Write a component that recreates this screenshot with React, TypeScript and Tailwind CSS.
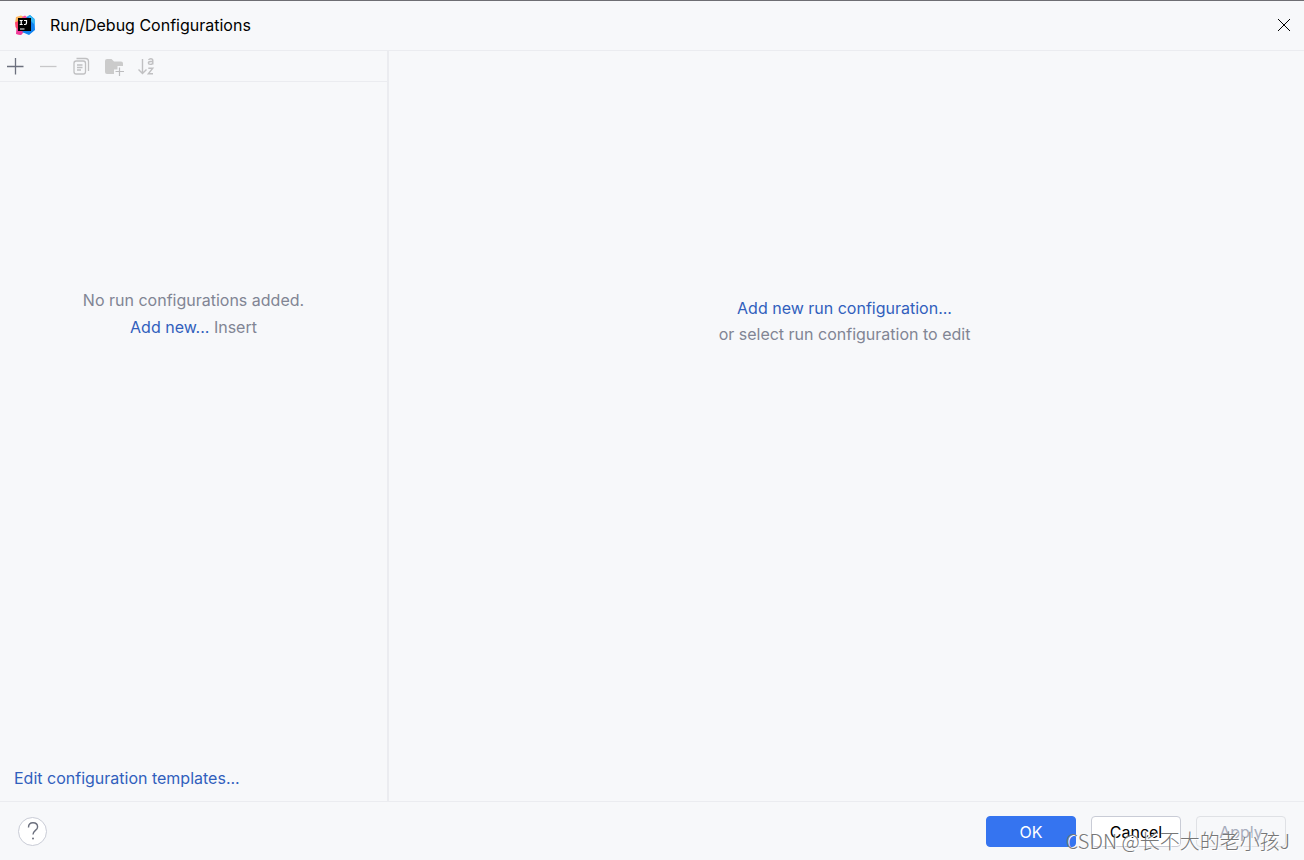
import React from 'react';

interface ToolButtonProps {
  label: string;
  disabled?: boolean;
  children: React.ReactNode;
}

function ToolButton({ label, disabled, children }: Readonly<ToolButtonProps>) {
  return (
    <button type="button" aria-label={label} title={label} disabled={disabled} className="flex size-5 items-center justify-center">
      {children}
    </button>
  );
}

function AppLogo() {
  return (
    <svg width="20" height="20" viewBox="0 0 20 20" aria-hidden="true">
      <path d="M1 2 6 .5 9 2 7 9 0 8Z" fill="#fcb45c" />
      <path d="M0 7.5 5 5l4 8-3 7-4.5-1L2 14.5.5 12Z" fill="#fe3f6b" />
      <path d="M1.5 14 4 13l5 4-3 3-5-1Z" fill="#f03b9b" />
      <path d="M7 2 10 .5 13 3 8 8Z" fill="#ff4f9b" />
      <path d="M11.5 2 15 0l4.5 4L20 15l-6 5-7-3 6-6Z" fill="#1283f0" />
      <path d="M13 1.200 15 0l4.500 4 .3 6L16 6Z" fill="#36b9f5" />
      <rect x="3" y="3" width="13" height="13" fill="#000" />
      <path d="M4.700 5.500h3M6.200 5.500v4M4.700 9.500h3M9 5.500h2.500v2.600q0 1.400-1.300 1.400H9M5 14h4.500" fill="none" stroke="#fff" strokeWidth="1.200" />
    </svg>
  );
}

function Toolbar() {
  return (
    <div className="flex h-[31px] shrink-0 items-center gap-[13px] border-b border-[#ebecf0] px-[5px] pb-px">
      <ToolButton label="Add New Configuration">
        <svg width="20" height="20" viewBox="0 0 20 20" fill="none" stroke="#6c707e" strokeWidth="1.300">
          <path d="M2 10.500h16.500M10.500 2v16.500" />
        </svg>
      </ToolButton>
      <ToolButton label="Remove Configuration" disabled>
        <svg width="20" height="20" viewBox="0 0 20 20" fill="none" stroke="#c7c7c9" strokeWidth="1.300">
          <path d="M2 10.500h16.500" />
        </svg>
      </ToolButton>
      <ToolButton label="Copy Configuration" disabled>
        <svg width="20" height="20" viewBox="0 0 20 20" fill="none" stroke="#c0c0c2" strokeWidth="1.300">
          <rect x="3" y="5" width="11.500" height="13" rx="2.200" />
          <path d="M5.500 2.500h9a3 3 0 0 1 3 3v9.500M6 9h5.500M6 11.500h5.500M6 14h4" />
        </svg>
      </ToolButton>
      <ToolButton label="Create New Folder" disabled>
        <svg width="20" height="20" viewBox="0 0 20 20">
          <path d="M1 5a2 2 0 0 1 2-2h4.500L10 5.500h7a2 2 0 0 1 2 2V10h-5.500v3.500H10V18H3a2 2 0 0 1-2-2Z" fill="#cbcbcb" />
          <path d="M11.500 15.500h8.500M15.500 11.500v8.500" fill="none" stroke="#bdbdbf" strokeWidth="1.200" />
        </svg>
      </ToolButton>
      <ToolButton label="Sort Configurations" disabled>
        <svg width="20" height="20" viewBox="0 0 20 20" fill="none" stroke="#c0c0c2" strokeWidth="1.400">
          <path d="M5.500 3v14.500M1.500 13.500l4 4 4-4" />
          <path d="M11.500 4q.8-1.300 2.300-1.300 2 0 2 1.800v4M15.800 5.500h-2q-2.400 0-2.400 1.500 0 1.400 1.800 1.400 2.600 0 2.600-2M11.300 12.200h4.500l-4.500 5.600H16" />
        </svg>
      </ToolButton>
    </div>
  );
}

export default function App() {
  return (
    <div className="relative flex min-h-screen flex-col border-t border-[#6e6e73] bg-[#f7f8fa] font-['Inter',sans-serif] text-base leading-[26px] text-black">
      <header className="flex h-[50px] shrink-0 items-center border-b border-[#ebecf0] pr-3 pb-px pl-[15px]">
        <AppLogo />
        <h1 className="ml-[15px] flex-1">Run/Debug Configurations</h1>
        <button type="button" aria-label="Close" className="flex size-4 items-center justify-center">
          <svg width="16" height="16" viewBox="0 0 16 16" stroke="#000" strokeWidth="1" shapeRendering="crispEdges">
            <path d="m2 2 12 12M14 2 2 14" />
          </svg>
        </button>
      </header>

      <main className="flex flex-1">
        <aside className="flex w-[389px] shrink-0 flex-col border-r-2 border-[#ebecf0]">
          <Toolbar />
          <div className="flex-1 pt-[205px] text-center leading-[27px] text-[#818594]">
            <p>No run configurations added.</p>
            <p>
              <a href="#add" className="text-[#315fbd]">Add new...</a> Insert
            </p>
          </div>
          <div className="px-[14px] pb-[10px]">
            <a href="#templates" className="text-[#315fbd]">Edit configuration templates...</a>
          </div>
        </aside>

        <section className="flex-1 pt-[244px] pr-1 text-center text-[#818594]">
          <p>
            <a href="#add" className="text-[#315fbd]">Add new run configuration...</a>
          </p>
          <p>or select run configuration to edit</p>
        </section>
      </main>

      <footer className="flex h-[59px] shrink-0 items-center gap-[15px] border-t border-[#ebecf0] px-[18px]">
        <button type="button" aria-label="Help" className="mr-auto flex size-[29px] items-center justify-center rounded-full border border-[#c9ccd6] bg-white">
          <svg width="12" height="20" viewBox="0 0 12 20" fill="none" stroke="#6c707e" strokeWidth="1.400">
            <path d="M1.500 6.500C1.500 3.500 3.200 1.700 6 1.700s4.600 1.700 4.600 4.200C10.600 9.300 6 9.500 6 13.500" />
            <circle cx="6" cy="17.500" r="1" fill="#6c707e" stroke="none" />
          </svg>
        </button>
        <button type="button" className="h-[31px] w-[90px] rounded border border-[#3574f0] bg-[#3574f0] pt-px text-white">OK</button>
        <button type="button" className="h-[31px] w-[90px] rounded border border-[#c9ccd6] bg-white pt-px">Cancel</button>
        <button type="button" disabled className="h-[31px] w-[90px] rounded border border-[#dfe1e5] pt-px text-[#a8adbd]">Apply</button>
      </footer>

      <div className="pointer-events-none absolute right-[14px] bottom-1 font-['Noto_Sans_CJK_SC',sans-serif] text-xl leading-[30px] font-light text-[#777777] [text-shadow:1px_1px_0_#ffffff]">
        CSDN @长不大的老小孩J
      </div>
    </div>
  );
}
